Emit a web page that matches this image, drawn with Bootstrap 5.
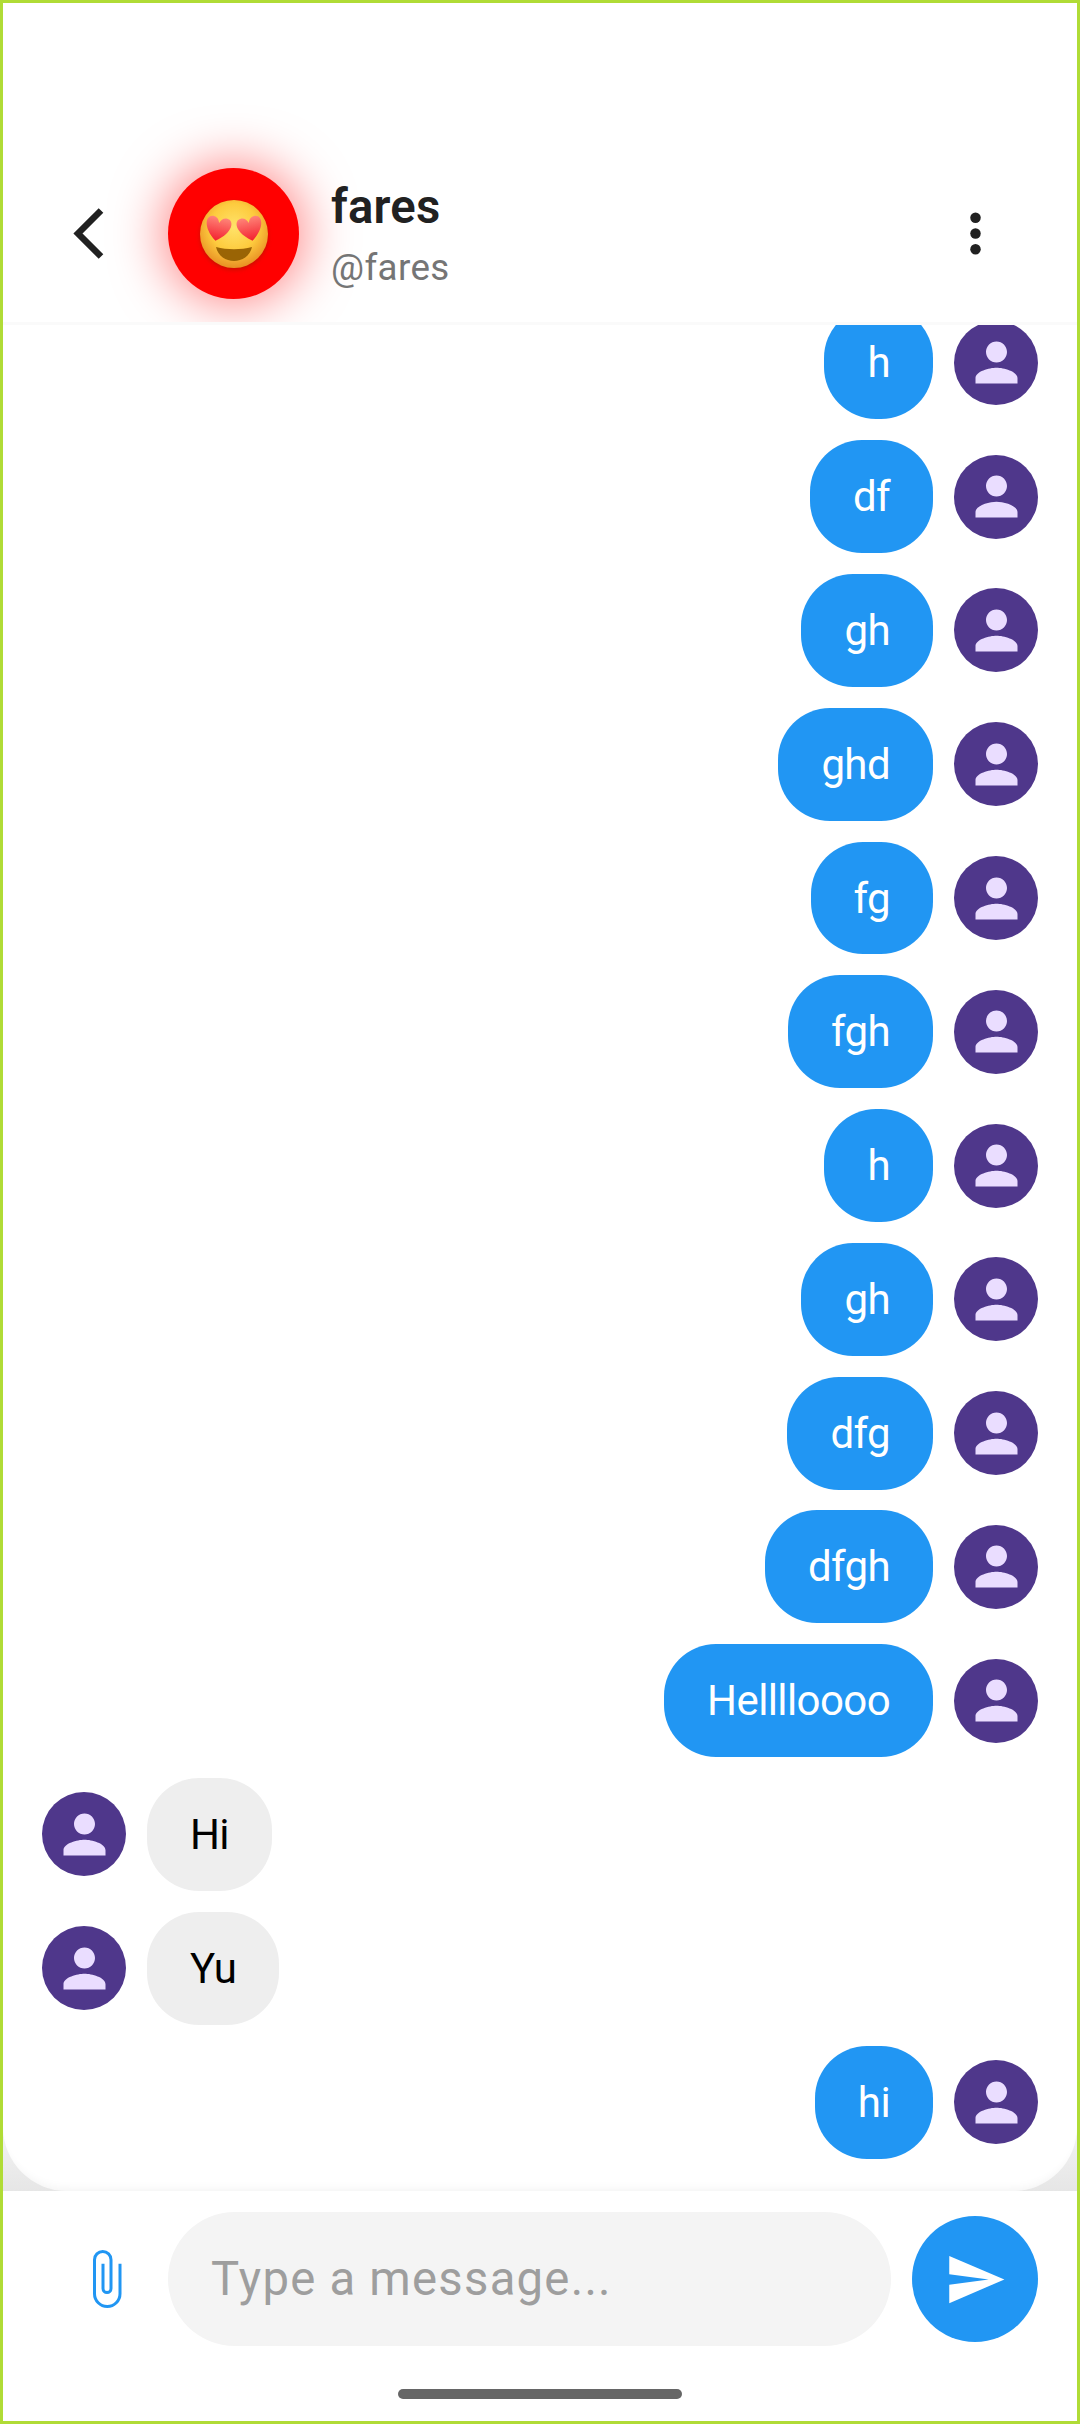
<!DOCTYPE html>
<html lang="en">
<head>
    <meta charset="UTF-8">
    <meta name="viewport" content="width=device-width, initial-scale=1.0">
    <title>Chat</title>
    <link href="https://cdn.jsdelivr.net/npm/bootstrap@5.3.0/dist/css/bootstrap.min.css" rel="stylesheet">
    <style>
        body { font-family: Roboto, "Liberation Sans", sans-serif; overflow: hidden; }
        .app-frame { border: 3px solid #b0dc36; height: 2424px; background: #fff; }

        .chat-head { height: 322px; padding: 142px 70.5px 0 54px; border-bottom: 3px solid #fafafa; flex: none; }
        .back-btn { width: 63px; height: 63px; margin-right: 48px; flex: none; }
        .head-avatar { width: 131px; height: 131px; background: #f00; box-shadow: 0 0 52px 4px rgba(255, 0, 0, .5); margin-right: 32px; flex: none; }
        .head-avatar svg { filter: drop-shadow(0 2px 2px rgba(120, 40, 0, .4)); }
        .head-name { font-size: 47.25px; line-height: 55px; margin-top: 2px; font-weight: 600; color: #212121; letter-spacing: .2px; }
        .head-user { font-size: 36.75px; line-height: 43px; margin-top: 10.5px; color: #757575; letter-spacing: .4px; }

        .chat-wrap { background: linear-gradient(#f5f5f5 calc(100% - 70px), #e6e6e6); min-height: 0; }
        .chat-list { background: #fff; border-radius: 0 0 64px 64px; gap: 20.9px; padding: 0 39px 32.5px 39px; box-shadow: inset 0 -10px 10px -8px rgba(0, 0, 0, .05); }
        .msg-row { gap: 21px; flex: none; }
        .msg-bubble { height: 112.9px; padding: 0 43px; border-radius: 52px; font-size: 42px; letter-spacing: -.6px; }
        .msg-out { background: #2196f3; color: #fff; }
        .msg-in { background: #eee; color: #000; }
        .user-pic { width: 84px; height: 84px; background: #4f378b; flex: none; }

        .chat-foot { height: 230px; flex: none; padding-top: 21px; }
        .clip-icon { width: 30px; height: 60px; margin: 0 46px 0 89px; flex: none; }
        .msg-input.form-control { height: 134px; background: #f4f4f4; border: 0; padding: 0 43px; font-size: 47.25px; letter-spacing: 1.25px; box-shadow: none; }
        .msg-input::placeholder { color: #9e9e9e; opacity: 1; }
        .send-btn { width: 126px; height: 126px; background: #2196f3; margin: 0 39px 0 21px; flex: none; }
        .home-bar { width: 284px; height: 10px; background: #666; margin: 43px auto 0; }
    </style>
</head>
<body>

<div class="app-frame d-flex flex-column">

    <div class="chat-head bg-white d-flex align-items-center overflow-hidden">
        <div class="back-btn">
            <svg width="63" height="63" viewBox="0 0 63 63" class="d-block"><path d="M44 8.500 21 31.500 44 54.500" fill="none" stroke="#212121" stroke-width="6.500"/></svg>
        </div>
        <div class="head-avatar rounded-circle d-flex align-items-center justify-content-center">
            <svg width="80" height="80" viewBox="0 0 80 80">
                <defs>
                    <radialGradient id="faceFill" cx="50%" cy="40%" r="58%">
                        <stop offset="0" stop-color="#ffe36a"/>
                        <stop offset=".6" stop-color="#fdcb3e"/>
                        <stop offset="1" stop-color="#ea9426"/>
                    </radialGradient>
                    <linearGradient id="heartFill" x1="0" y1="0" x2="0" y2="1">
                        <stop offset="0" stop-color="#ff8578"/>
                        <stop offset="1" stop-color="#f3202f"/>
                    </linearGradient>
                </defs>
                <circle cx="40" cy="40" r="34" fill="url(#faceFill)"/>
                <path transform="translate(24 34.500) rotate(12)" d="M0 12.500C-16 1-14.500-11.500-7-11.500-3.500-11.500-1-9 0-5.500 1-9 3.500-11.500 7-11.500 14.500-11.500 16 1 0 12.500Z" fill="url(#heartFill)"/>
                <path transform="translate(56 34.500) rotate(-12)" d="M0 12.500C-16 1-14.500-11.500-7-11.500-3.500-11.500-1-9 0-5.500 1-9 3.500-11.500 7-11.500 14.500-11.500 16 1 0 12.500Z" fill="url(#heartFill)"/>
                <path d="M22 53C33 56 47 56 58 53 56 62 48 67 40 67 32 67 24 62 22 53Z" fill="#9a6405"/>
            </svg>
        </div>
        <div>
            <div class="head-name">fares</div>
            <div class="head-user">@fares</div>
        </div>
        <div class="ms-auto">
            <svg width="63" height="63" viewBox="0 0 24 24" fill="#212121" class="d-block"><circle cx="12" cy="6" r="2"/><circle cx="12" cy="12" r="2"/><circle cx="12" cy="18" r="2"/></svg>
        </div>
    </div>

    <div class="chat-wrap flex-grow-1 d-flex flex-column">
        <div class="chat-list flex-grow-1 d-flex flex-column justify-content-end overflow-hidden" id="chatList"></div>
    </div>

    <div class="chat-foot bg-white">
        <div class="d-flex align-items-center">
            <svg class="clip-icon" viewBox="0 0 30 60" fill="none" stroke="#2196f3" stroke-width="3"><path d="M11 14.700V39.500a4 4 0 0 0 8 0V10.750a8.250 8.250 0 0 0-16.500 0V44.750a12.750 12.750 0 0 0 25.500 0V14.700"/></svg>
            <input type="text" class="form-control msg-input rounded-pill flex-grow-1" placeholder="Type a message...">
            <div class="send-btn rounded-circle d-flex align-items-center justify-content-center">
                <svg width="63" height="63" viewBox="0 0 24 24" fill="#fff"><path d="M2.010 21 23 12 2.010 3 2 10l15 2-15 2z"/></svg>
            </div>
        </div>
        <div class="home-bar rounded-pill"></div>
    </div>

</div>

<script src="https://cdn.jsdelivr.net/npm/bootstrap@5.3.0/dist/js/bootstrap.bundle.min.js"></script>
<script>
    const messages = [
        ['h', 1], ['df', 1], ['gh', 1], ['ghd', 1], ['fg', 1], ['fgh', 1], ['h', 1],
        ['gh', 1], ['dfg', 1], ['dfgh', 1], ['Helllloooo', 1], ['Hi', 0], ['Yu', 0], ['hi', 1]
    ]
    const userPic = `<div class="user-pic rounded-circle d-flex align-items-center justify-content-center">
        <svg width="63" height="63" viewBox="0 0 24 24" fill="#eaddff"><path d="M12 12c2.210 0 4-1.790 4-4s-1.790-4-4-4-4 1.790-4 4 1.790 4 4 4zm0 2c-2.670 0-8 1.340-8 4v2h16v-2c0-2.660-5.330-4-8-4z"/></svg>
    </div>`

    messages.forEach(([text, mine]) => {
        const bubble = `<div class="msg-bubble ${mine ? 'msg-out' : 'msg-in'} d-flex align-items-center">${text}</div>`
        document.querySelector('#chatList').innerHTML += mine
            ? `<div class="msg-row d-flex align-items-center justify-content-end">${bubble}${userPic}</div>`
            : `<div class="msg-row d-flex align-items-center">${userPic}${bubble}</div>`
    })
</script>
</body>
</html>
